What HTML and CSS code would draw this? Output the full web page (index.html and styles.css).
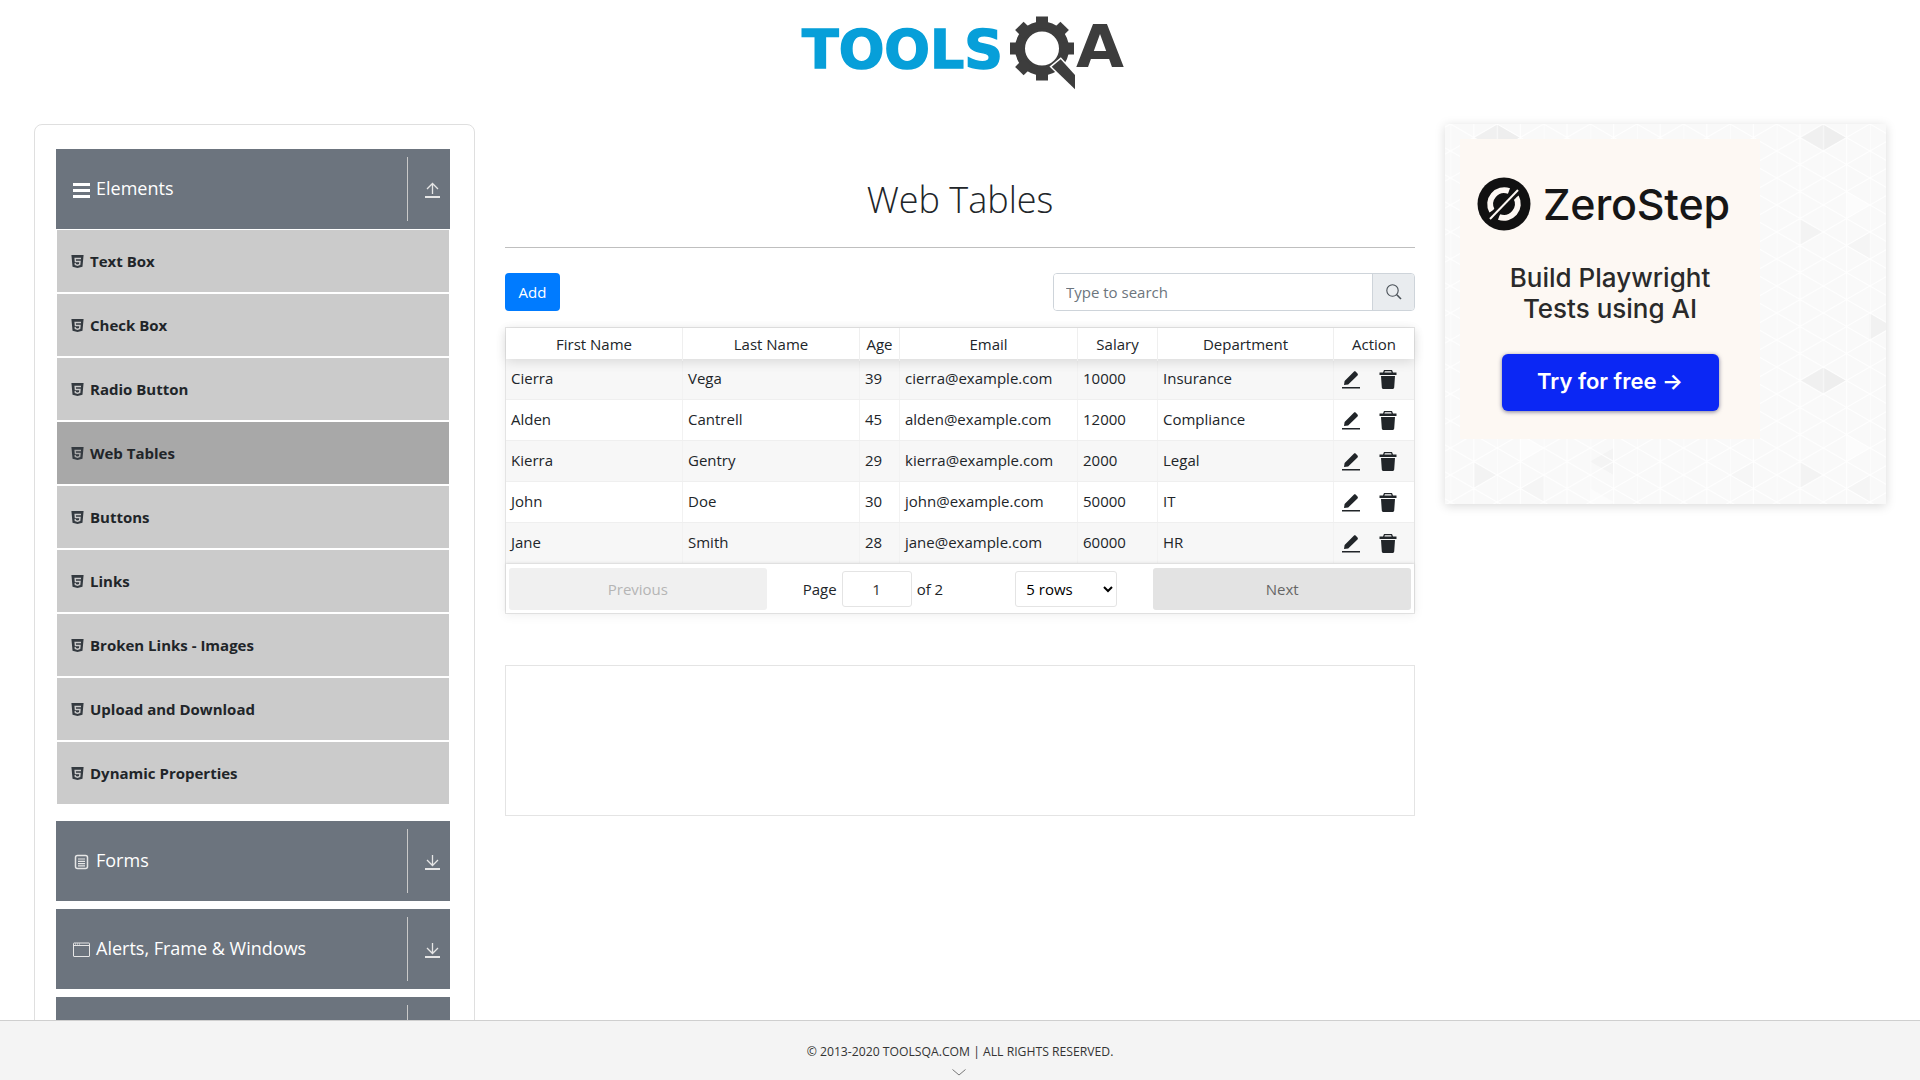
FILE: index.html

```html
<!DOCTYPE html>
<html lang="en">
<head>
  <meta charset="UTF-8">
  <title>Web Tables</title>
  <link rel="stylesheet" href="styles.css">
</head>
<body>
  <svg class="sprite">
    <symbol id="i-html5" viewBox="0 0 16 16"><path fill-rule="evenodd" d="M1.500 1h13l-1.200 12.500L8 15l-5.300-1.500zM4.700 4l.4 4.800h4.700l-.2 1.900L8 11.200l-1.700-.5-.1-1.200H4.800l.2 2.300L8 12.700l3-.9.500-4.500H6.400l-.1-1.800h5.400l.1-1.500z"/></symbol>
    <symbol id="i-edit" viewBox="0 0 18 19"><path d="M0 17h18v1.600H0zM2 15l.6-4L11.800 1.800c.6-.6 1.400-.6 2 0l1.700 1.700c.5.600.5 1.400 0 2L6.200 14.400z"/></symbol>
    <symbol id="i-trash" viewBox="0 0 18 19"><path fill-rule="evenodd" d="M5 0h8l1 2.500h3.500V5H.5V2.500H4zM5.900 1.200l-.5 1.300h7.200l-.5-1.300zM2 6h14l-.8 11.500c-.1.900-.8 1.500-1.600 1.500H4.400c-.8 0-1.500-.6-1.600-1.500z"/></symbol>
    <symbol id="i-down" viewBox="0 0 15 16"><path fill="none" stroke="#e6e6e6" stroke-width="1.300" d="M7.500 1v10.500M2 6l5.500 5.500L13 6"/><path fill="none" stroke="#e6e6e6" stroke-width="2" d="M0 15h15"/></symbol>
  </svg>

  <header class="top">
    <svg class="logo" width="360" height="110" viewBox="0 0 360 110">
      <text class="logo-tools" x="22" y="68" textLength="201" lengthAdjust="spacingAndGlyphs">TOOLS</text>
      <g fill="#3d3d3d">
        <circle cx="262" cy="48.500" r="22" fill="none" stroke="#3d3d3d" stroke-width="10"/>
        <rect x="256" y="16.500" width="12" height="12"/>
        <rect x="256" y="16.500" width="12" height="12" transform="rotate(45 262 48.500)"/>
        <rect x="256" y="16.500" width="12" height="12" transform="rotate(90 262 48.500)"/>
        <rect x="256" y="16.500" width="12" height="12" transform="rotate(180 262 48.500)"/>
        <rect x="256" y="16.500" width="12" height="12" transform="rotate(225 262 48.500)"/>
        <rect x="256" y="16.500" width="12" height="12" transform="rotate(270 262 48.500)"/>
        <rect x="256" y="16.500" width="12" height="12" transform="rotate(315 262 48.500)"/>
        <path d="M271.700 66.700l9-7.400L295 75v14.300z" stroke="#fff" stroke-width="3" paint-order="stroke"/>
      </g>
      <text class="logo-a" x="296" y="67" textLength="48" lengthAdjust="spacingAndGlyphs">A</text>
    </svg>
  </header>

  <div class="layout">
    <aside class="side-card">
      <div class="group">
        <div class="group-head">
          <span class="group-title">
            <svg class="head-icon" width="17" height="16" viewBox="0 0 17 16" fill="#fff"><rect y="1" width="17" height="3"/><rect y="7" width="17" height="3"/><rect y="13" width="17" height="3"/></svg>
            Elements
          </span>
          <span class="toggle">
            <svg width="15" height="16" viewBox="0 0 15 16" fill="none" stroke="#e6e6e6" stroke-width="1.300"><path d="M7.500 12V1.500M2 7l5.500-5.500L13 7"/><path d="M0 15h15" stroke-width="2"/></svg>
          </span>
        </div>
        <ul class="menu">
          <li class="menu-item"><svg class="h5"><use href="#i-html5"/></svg>Text Box</li>
          <li class="menu-item"><svg class="h5"><use href="#i-html5"/></svg>Check Box</li>
          <li class="menu-item"><svg class="h5"><use href="#i-html5"/></svg>Radio Button</li>
          <li class="menu-item active"><svg class="h5"><use href="#i-html5"/></svg>Web Tables</li>
          <li class="menu-item"><svg class="h5"><use href="#i-html5"/></svg>Buttons</li>
          <li class="menu-item"><svg class="h5"><use href="#i-html5"/></svg>Links</li>
          <li class="menu-item"><svg class="h5"><use href="#i-html5"/></svg>Broken Links - Images</li>
          <li class="menu-item"><svg class="h5"><use href="#i-html5"/></svg>Upload and Download</li>
          <li class="menu-item"><svg class="h5"><use href="#i-html5"/></svg>Dynamic Properties</li>
        </ul>
      </div>

      <div class="group">
        <div class="group-head">
          <span class="group-title">
            <svg class="head-icon" width="17" height="16" viewBox="0 0 17 16" fill="none" stroke="#e6e6e6"><rect x="2.500" y="1.500" width="12" height="13" rx="2" stroke-width="1.500"/><path d="M5 5h7M5 7.300h7M5 9.600h7M5 11.900h7" stroke-width="1.200"/></svg>
            Forms
          </span>
          <span class="toggle"><svg width="15" height="16"><use href="#i-down"/></svg></span>
        </div>
      </div>

      <div class="group">
        <div class="group-head">
          <span class="group-title">
            <svg class="head-icon" width="17" height="15" viewBox="0 0 17 15" fill="none" stroke="#e6e6e6"><rect x=".5" y="1" width="16" height="13.500" rx=".5"/><path d="M.5 3.500h16"/><path d="M2 2h1M4 2h1M6 2h1" stroke-width="1.200"/></svg>
            Alerts, Frame &amp; Windows
          </span>
          <span class="toggle"><svg width="15" height="16"><use href="#i-down"/></svg></span>
        </div>
      </div>

      <div class="group">
        <div class="group-head"><span class="group-title"></span><span class="toggle"></span></div>
      </div>
    </aside>

    <main class="content">
      <h1 class="page-title">Web Tables</h1>
      <div class="toolbar">
        <button class="btn-add">Add</button>
        <div class="search">
          <input class="search-input" type="text" placeholder="Type to search">
          <span class="search-btn">
            <svg width="16" height="16" viewBox="0 0 16 16" fill="none" stroke="#495057"><circle cx="6.500" cy="6.500" r="5.700" stroke-width="1.100"/><path d="M10.800 10.800L15 15" stroke-width="1.600"/></svg>
          </span>
        </div>
      </div>

      <div class="rt-table">
        <div class="rt-row rt-head">
          <div class="rt-th">First Name</div>
          <div class="rt-th">Last Name</div>
          <div class="rt-th">Age</div>
          <div class="rt-th">Email</div>
          <div class="rt-th">Salary</div>
          <div class="rt-th">Department</div>
          <div class="rt-th">Action</div>
        </div>
        <div class="rt-row odd">
          <div class="rt-td">Cierra</div><div class="rt-td">Vega</div><div class="rt-td">39</div><div class="rt-td">cierra@example.com</div><div class="rt-td">10000</div><div class="rt-td">Insurance</div>
          <div class="rt-td actions"><svg class="ic"><use href="#i-edit"/></svg><svg class="ic"><use href="#i-trash"/></svg></div>
        </div>
        <div class="rt-row">
          <div class="rt-td">Alden</div><div class="rt-td">Cantrell</div><div class="rt-td">45</div><div class="rt-td">alden@example.com</div><div class="rt-td">12000</div><div class="rt-td">Compliance</div>
          <div class="rt-td actions"><svg class="ic"><use href="#i-edit"/></svg><svg class="ic"><use href="#i-trash"/></svg></div>
        </div>
        <div class="rt-row odd">
          <div class="rt-td">Kierra</div><div class="rt-td">Gentry</div><div class="rt-td">29</div><div class="rt-td">kierra@example.com</div><div class="rt-td">2000</div><div class="rt-td">Legal</div>
          <div class="rt-td actions"><svg class="ic"><use href="#i-edit"/></svg><svg class="ic"><use href="#i-trash"/></svg></div>
        </div>
        <div class="rt-row">
          <div class="rt-td">John</div><div class="rt-td">Doe</div><div class="rt-td">30</div><div class="rt-td">john@example.com</div><div class="rt-td">50000</div><div class="rt-td">IT</div>
          <div class="rt-td actions"><svg class="ic"><use href="#i-edit"/></svg><svg class="ic"><use href="#i-trash"/></svg></div>
        </div>
        <div class="rt-row odd">
          <div class="rt-td">Jane</div><div class="rt-td">Smith</div><div class="rt-td">28</div><div class="rt-td">jane@example.com</div><div class="rt-td">60000</div><div class="rt-td">HR</div>
          <div class="rt-td actions"><svg class="ic"><use href="#i-edit"/></svg><svg class="ic"><use href="#i-trash"/></svg></div>
        </div>
        <div class="pagination">
          <button class="page-btn prev">Previous</button>
          <div class="page-center">
            <span class="page-info">Page <input class="page-input" type="text" value="1"> of 2</span>
            <select class="page-size"><option>5 rows</option><option>10 rows</option></select>
          </div>
          <button class="page-btn next">Next</button>
        </div>
      </div>

      <div class="ad-slot"></div>
    </main>

    <aside class="promo">
      <svg class="promo-bg" width="441" height="380">
        <defs>
          <pattern id="shade" x="5.500" width="326.200" height="243" patternUnits="userSpaceOnUse">
            <polygon points="46.600,0 46.600,27 69.900,13.500" fill="#eee"/>
            <polygon points="46.600,0 46.600,27 23.300,13.500" fill="#f0f0f0"/>
            <polygon points="116.500,40.500 116.500,67.500 139.800,54" fill="#f1f1f1"/>
            <polygon points="163.100,81 163.100,108 139.800,94.500" fill="#f4f4f4"/>
            <polygon points="23.300,94.500 23.300,121.500 46.600,108" fill="#f3f3f3"/>
            <polygon points="93.200,108 93.200,135 69.900,121.500" fill="#f5f5f5"/>
            <polygon points="69.900,67.500 69.900,94.500 93.200,81" fill="#fcfcfc"/>
            <polygon points="139.800,121.500 139.800,148.500 163.100,135" fill="#fcfcfc"/>
            <polygon points="233,148.500 233,175.500 256.300,162" fill="#f0f0f0"/>
            <polygon points="233,148.500 233,175.500 209.700,162" fill="#f3f3f3"/>
            <polygon points="279.600,27 279.600,54 256.300,40.500" fill="#f2f2f2"/>
            <polygon points="302.900,94.500 302.900,121.500 279.600,108" fill="#f6f6f6"/>
            <polygon points="93.200,189 93.200,216 116.500,202.500" fill="#f1f1f1"/>
            <polygon points="186.400,216 186.400,243 163.100,229.500" fill="#f4f4f4"/>
            <polygon points="256.300,202.500 256.300,229.500 279.600,216" fill="#fcfcfc"/>
          </pattern>
          <pattern id="lines" x="5.500" width="46.600" height="27" patternUnits="userSpaceOnUse">
            <path d="M0 0v27M23.300 0v27M0 0l23.300 13.500L46.600 0M0 27l23.300-13.500L46.600 27" fill="none" stroke="#fff"/>
          </pattern>
        </defs>
        <rect width="441" height="380" fill="#f9f9f9"/>
        <rect width="441" height="380" fill="url(#shade)"/>
        <rect width="441" height="380" fill="url(#lines)"/>
      </svg>
      <div class="promo-box">
        <div class="promo-brand">
          <svg width="54" height="54" viewBox="0 0 54 54">
            <circle cx="27" cy="27" r="26.500" fill="#111"/>
            <path d="M15 34a14 14 0 0 1 17-20M39 20a14 14 0 0 1-17 20" fill="none" stroke="#fdf8f3" stroke-width="6"/>
            <path d="M13 42L41 13" stroke="#111" stroke-width="8"/>
            <path d="M13 42L41 13" stroke="#fdf8f3" stroke-width="2"/>
          </svg>
          <span class="promo-name">ZeroStep</span>
        </div>
        <p class="promo-text">Build Playwright<br>Tests using AI</p>
        <a class="promo-btn">Try for free →</a>
      </div>
    </aside>
  </div>

  <footer class="foot">
    <span>© 2013-2020 TOOLSQA.COM | ALL RIGHTS RESERVED.</span>
    <svg class="foot-arrow" width="14" height="7" viewBox="0 0 14 7" fill="none" stroke="#777"><path d="M.5.500L7 6 13.500.5"/></svg>
  </footer>
</body>
</html>
```

FILE: styles.css

```css
html, body {
  margin: 0;
  height: 100%;
  overflow: hidden;
}
body {
  background-color: #fff;
  color: #212529;
  font-family: "Open Sans", Arial, sans-serif;
  font-size: 15px;
}
.sprite {
  display: none;
}
.top {
  display: flex;
  justify-content: center;
  height: 110px;
  margin-bottom: 14px;
}
.logo-tools {
  fill: #079fd9;
  stroke: #079fd9;
  stroke-width: 1.5px;
  font-family: "DejaVu Sans", sans-serif;
  font-weight: 700;
  font-size: 54px;
}
.logo-a {
  fill: #3d3d3d;
  font-family: "DejaVu Sans", sans-serif;
  font-weight: 700;
  font-size: 58px;
}
.layout {
  display: grid;
  grid-template-columns: 441px 910px 441px;
  gap: 30px;
  padding-left: 34px;
  align-items: start;
}

/* sidebar */
.side-card {
  border: 1px solid #dfdfdf;
  border-radius: 8px;
  padding: 24px 24px 0 21px;
}
.group {
  margin-bottom: 8px;
}
.group-head {
  display: flex;
  justify-content: space-between;
  align-items: center;
  height: 80px;
  background-color: #6c747e;
  color: #fff;
  font-size: 18px;
  padding-left: 17px;
}
.group-title {
  display: flex;
  align-items: center;
  gap: 6px;
  padding-bottom: 2px;
}
.head-icon {
  margin-top: 3px;
}
.toggle {
  display: flex;
  align-items: center;
  align-self: stretch;
  width: 43px;
  box-sizing: border-box;
  margin: 8px 0;
  padding-left: 17px;
  border-left: 1px solid #c9c9c9;
}
.toggle svg {
  margin-top: 2px;
}
.menu {
  list-style: none;
  margin: 1px 1px 17px;
  padding: 0;
}
.menu-item {
  display: flex;
  align-items: center;
  height: 62px;
  margin-bottom: 2px;
  padding-left: 13px;
  background-color: #cbcbcb;
  font-weight: 700;
  font-size: 15px;
}
.menu-item.active {
  background-color: #a8a8a8;
}
.h5 {
  width: 15px;
  height: 15px;
  margin-right: 5px;
  fill: #343a40;
}

/* main column */
.content {
  min-width: 0;
}
.page-title {
  margin: 0;
  height: 124px;
  box-sizing: border-box;
  padding-top: 49px;
  border-bottom: 1px solid #bfbfbf;
  text-align: center;
  font-weight: 300;
  font-size: 36px;
  line-height: 54px;
}
.toolbar {
  display: flex;
  justify-content: space-between;
  margin: 25px 0 16px;
}
.btn-add {
  width: 55px;
  height: 38px;
  background-color: #007bff;
  color: #fff;
  border: none;
  border-radius: 4px;
  font: inherit;
}
.search {
  display: flex;
  width: 362px;
  height: 38px;
  box-sizing: border-box;
  border: 1px solid #ced4da;
  border-radius: 4px;
  overflow: hidden;
}
.search-input {
  flex: 1;
  min-width: 0;
  border: none;
  padding: 0 12px;
  font: inherit;
  outline: none;
}
.search-input::placeholder {
  color: #6c757d;
}
.search-btn {
  display: flex;
  align-items: center;
  justify-content: center;
  width: 41px;
  background-color: #e9ecef;
  border-left: 1px solid #ced4da;
}
.rt-table {
  border: 1px solid #e4e4e4;
  box-shadow: 0 2px 10px rgba(0,0,0,0.06);
}
.rt-row {
  display: grid;
  grid-template-columns: 177px 177px 40px 178px 80px 176px 80px;
  height: 41px;
  box-sizing: border-box;
  border-bottom: 1px solid #efefef;
}
.rt-row.odd {
  background-color: #f7f7f7;
}
.rt-head {
  position: relative;
  height: 31px;
  border-bottom: none;
  box-shadow: 0 3px 12px rgba(0,0,0,0.12);
  background-color: #fff;
}
.rt-th {
  text-align: center;
  line-height: 33px;
  border-right: 1px solid #efefef;
  white-space: nowrap;
}
.rt-td {
  padding: 0 5px;
  line-height: 38px;
  border-right: 1px solid #f2f2f2;
  white-space: nowrap;
}
.rt-th:last-child, .rt-td:last-child {
  border-right: none;
}
.actions {
  display: flex;
  align-items: center;
  gap: 19px;
  padding: 0 0 0 8px;
}
.ic {
  width: 18px;
  height: 19px;
  fill: #212529;
}
.pagination {
  display: grid;
  grid-template-columns: 1fr 1.5fr 1fr;
  height: 49px;
  box-sizing: border-box;
  padding: 4px 3px 3px;
  box-shadow: 0 -1px 3px rgba(0,0,0,0.1);
  position: relative;
}
.page-btn {
  border: none;
  border-radius: 3px;
  font: inherit;
}
.prev {
  background-color: #f0f0f0;
  color: #b5b5b5;
}
.next {
  background-color: #e3e3e3;
  color: #666;
}
.page-center {
  display: flex;
  align-items: center;
  justify-content: space-between;
  padding: 0 36px;
}
.page-info {
  display: flex;
  align-items: center;
  gap: 5px;
}
.page-input {
  width: 70px;
  height: 36px;
  box-sizing: border-box;
  border: 1px solid #e4e4e4;
  border-radius: 3px;
  text-align: center;
  font: inherit;
  color: #333;
}
.page-size {
  width: 102px;
  height: 36px;
  border: 1px solid #e4e4e4;
  border-radius: 3px;
  background-color: #fff;
  font: inherit;
  padding-left: 6px;
}
.ad-slot {
  height: 151px;
  box-sizing: border-box;
  margin-top: 51px;
  border: 1px solid #e4e4e4;
}

/* right promo */
.promo {
  position: relative;
  height: 380px;
  padding: 15px;
  box-sizing: border-box;
  box-shadow: 0 2px 10px rgba(0,0,0,0.15);
}
.promo-bg {
  position: absolute;
  left: 0;
  top: 0;
}
.promo-box {
  position: relative;
  width: 300px;
  height: 300px;
  box-sizing: border-box;
  padding-top: 38px;
  background-color: #fdf8f3;
  font-family: Inter, sans-serif;
  color: #161616;
  text-align: center;
}
.promo-brand {
  display: flex;
  align-items: center;
  gap: 12px;
  height: 54px;
  padding-left: 17px;
}
.promo-name {
  font-size: 43px;
  font-weight: 500;
  letter-spacing: -0.2px;
}
.promo-text {
  margin: 31px 0 0;
  font-size: 26px;
  line-height: 31px;
  font-weight: 500;
  color: #2a2a2a;
}
.promo-btn {
  display: block;
  width: 217px;
  height: 57px;
  margin: 30px auto 0;
  border-radius: 6px;
  background-color: #0b27f4;
  color: #fff;
  font-size: 22px;
  font-weight: 600;
  line-height: 55px;
  box-shadow: 0 1px 4px rgba(0,0,60,0.5);
}

/* footer */
.foot {
  position: fixed;
  left: 0;
  right: 0;
  bottom: 0;
  height: 60px;
  box-sizing: border-box;
  padding-top: 21px;
  border-top: 1px solid #cfcfcf;
  background-color: #f4f4f4;
  text-align: center;
  font-size: 12.2px;
  line-height: 20px;
  color: #333;
}
.foot-arrow {
  position: absolute;
  left: 952px;
  top: 48px;
}
```
